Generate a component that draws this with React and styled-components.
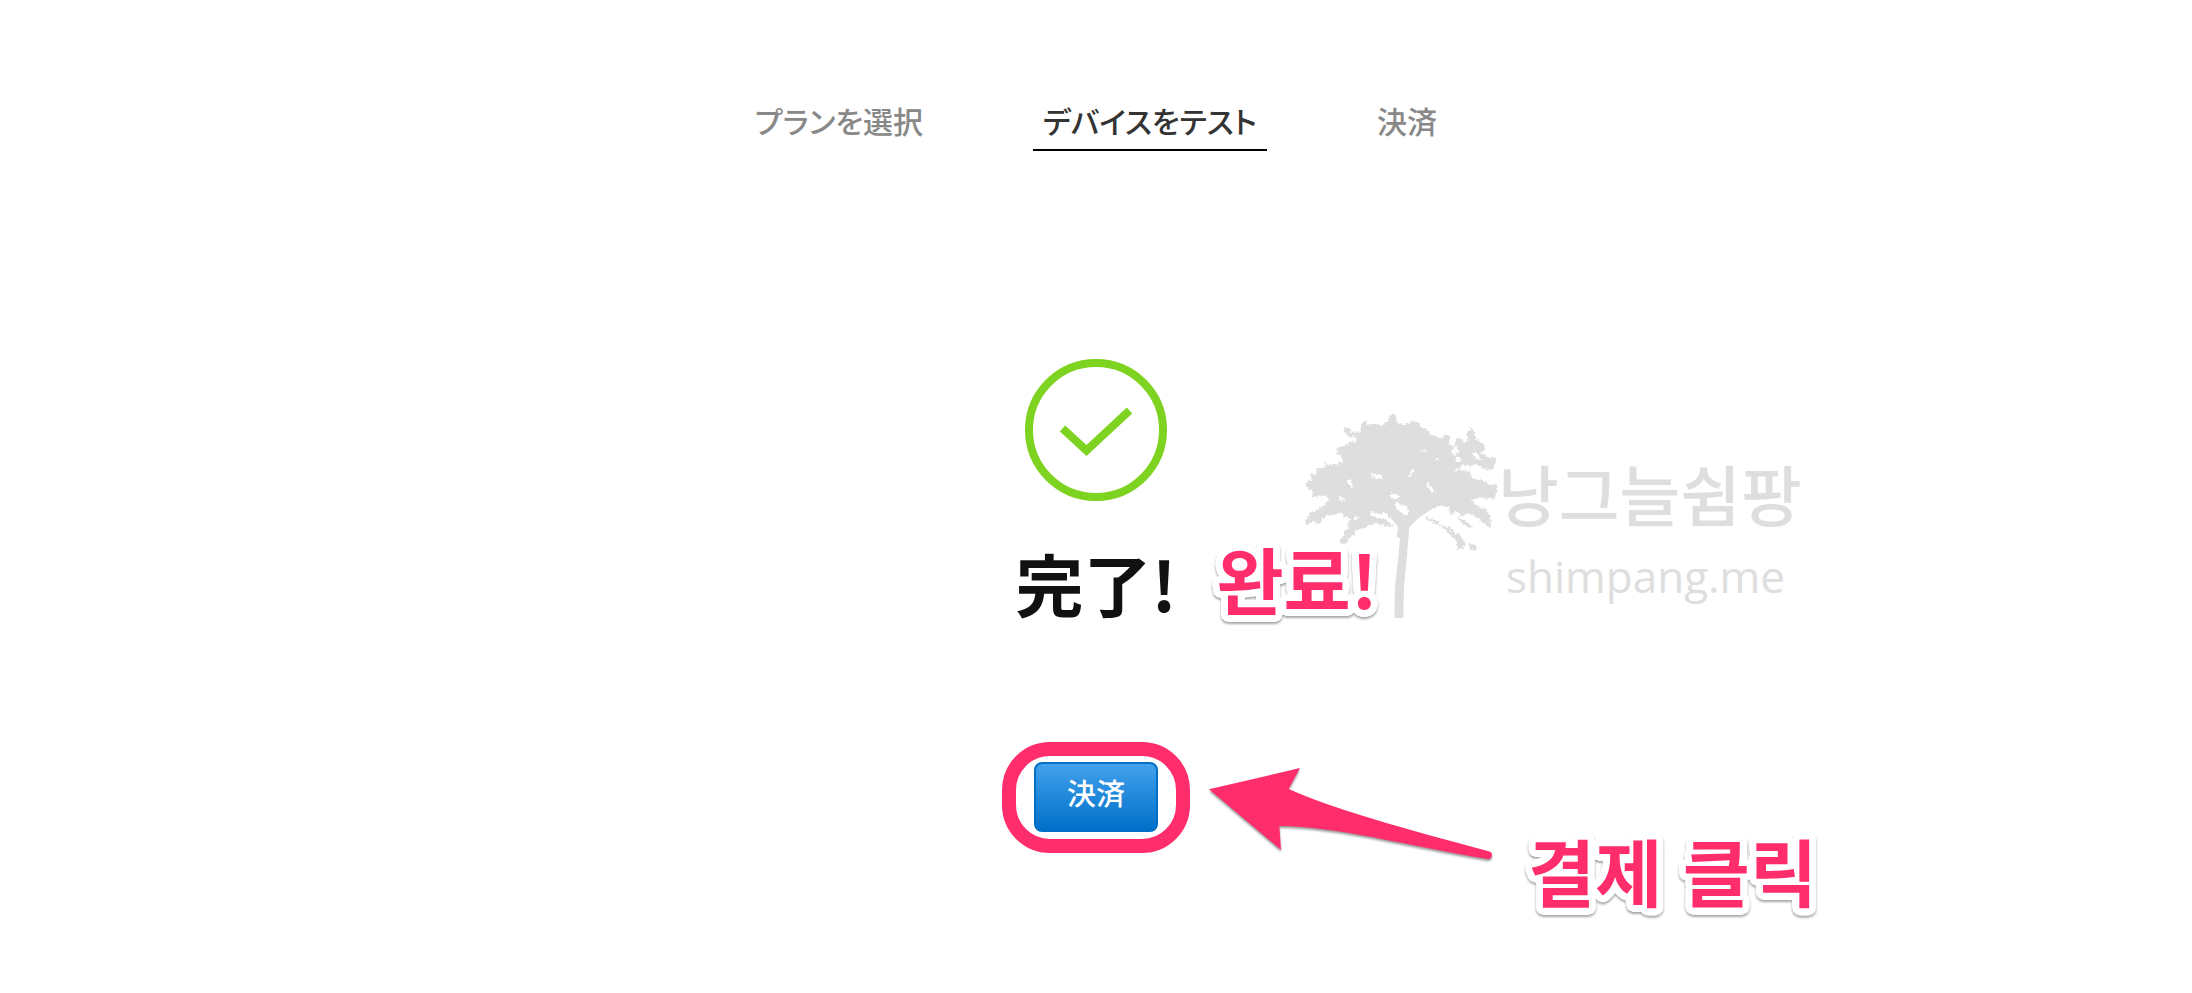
import React from 'react';
import styled, { createGlobalStyle } from 'styled-components';

const COLORS = {
  text: '#111111',
  active: '#333333',
  muted: '#888888',
  success: '#7ed321',
  note: '#ff2d6b',
  watermark: '#dedede',
};

// white ring of shadows, gives the notes a rounded outline
const outline = Array.from({ length: 32 }, (_, i) => {
  const angle = (i * Math.PI) / 16;
  const x = (Math.cos(angle) * 7).toFixed(2);
  const y = (Math.sin(angle) * 7).toFixed(2);
  return `${x}px ${y}px 0 white`;
})
  .concat('3px 0 0 white', '-3px 0 0 white', '0 3px 0 white', '0 -3px 0 white')
  .join(', ');

const GlobalStyle = createGlobalStyle`
  body {
    margin: 0;
    background: white;
    font-family: 'Noto Sans CJK JP', 'Noto Sans', sans-serif;
  }
`;

const SPage = styled.div`
  min-height: 100vh;
  box-sizing: border-box;
  padding: 98px 24px 80px;
  overflow: hidden;
`;
const SSteps = styled.nav`
  display: flex;
  justify-content: center;
  gap: 100px;
`;
const SStep = styled.a`
  padding: 0 10px 6px;
  border-bottom: 2px solid ${({ $active }) => ($active ? 'black' : 'transparent')};
  color: ${({ $active }) => ($active ? COLORS.active : COLORS.muted)};
  font-size: 30px;
  font-weight: 500;
  line-height: 45px;
  font-feature-settings: 'palt';
  text-decoration: none;
`;
const SResult = styled.main`
  position: relative;
  display: flex;
  flex-direction: column;
  align-items: center;
  padding-top: 208px;
`;
const SCheck = styled.svg`
  width: 142px;
  height: 142px;
`;
const STitleRow = styled.div`
  position: relative;
  margin-top: 34px;
`;
const STitle = styled.h1`
  margin: 0;
  color: ${COLORS.text};
  font-size: 68px;
  font-weight: 700;
  line-height: 96px;
  font-feature-settings: 'palt';
`;
const SButtonRow = styled.div`
  position: relative;
  margin-top: 111px;
  padding: 6px 18px 7px;
  border: 14px solid ${COLORS.note};
  border-radius: 48px;
`;
const SButton = styled.button`
  display: block;
  width: 124px;
  height: 70px;
  padding: 0 0 10px;
  border: 2px solid #0070c9;
  border-radius: 8px;
  background: linear-gradient(#42a1ec, #0070c9);
  color: white;
  font-family: inherit;
  font-size: 29px;
  font-weight: 500;
  line-height: 44px;
  cursor: pointer;

  &:hover {
    filter: brightness(95%);
  }
`;
const SNote = styled.span`
  position: absolute;
  left: ${({ $left }) => $left}px;
  top: ${({ $top }) => $top}px;
  color: ${COLORS.note};
  font-family: 'Noto Sans CJK KR', sans-serif;
  font-size: 73px;
  font-weight: 700;
  line-height: 96px;
  white-space: nowrap;
  text-shadow: ${outline};
  filter: drop-shadow(0 2px 1px rgba(0, 0, 0, 0.35));
`;
const SArrow = styled.svg`
  position: absolute;
  left: 174px;
  top: -7px;
  width: 320px;
  height: 130px;
  filter: drop-shadow(0 2px 1px rgba(0, 0, 0, 0.4));
`;
const SWatermark = styled.div`
  position: absolute;
  left: 50%;
  top: 249px;
  display: flex;
  margin-left: 194px;
  color: ${COLORS.watermark};
`;
const STree = styled.svg`
  width: 230px;
  height: 230px;
`;
const SBrand = styled.div`
  display: flex;
  flex-direction: column;
  margin-left: -22px;
  padding-top: 44px;
  white-space: nowrap;
`;
const SBrandName = styled.span`
  font-family: 'Noto Sans CJK KR', sans-serif;
  font-size: 66px;
  font-weight: 500;
  line-height: 96px;
`;
const SBrandSite = styled.span`
  padding: 6px 0 0 8px;
  font-family: 'Open Sans', sans-serif;
  font-size: 44px;
  line-height: 60px;
`;

const Tree = () => (
  <STree viewBox="0 0 690 690" fill="currentColor" aria-hidden="true">
    <filter id="leaves" x="-0.1" y="-0.1" width="1.2" height="1.2" colorInterpolationFilters="sRGB">
      <feTurbulence type="fractalNoise" baseFrequency="0.13" numOctaves="3" seed="4" />
      <feDisplacementMap in="SourceGraphic" scale="15" xChannelSelector="R" yChannelSelector="G" />
    </filter>
    <g filter="url(#leaves)">
      <path
        fillRule="evenodd"
        d="M296 50L308 40L322 50L318 64L340 76L372 64L386 68L390 80L412 90L424 104L450 114L468 104L480 108L476 130L492 140L500 114L514 116L518 130L532 122L530 100L544 82L556 100L558 120L580 130L584 148L570 160L590 172L616 170L618 190L604 212L582 206L560 192L540 200L520 192L508 208L540 216L548 236L580 242L600 256L618 252L622 270L612 298L590 296L570 292L545 300L560 318L590 330L602 344L604 362L598 384L584 372L560 350L534 340L516 350L500 334L480 346L478 322L450 318L420 326L396 340L380 354L360 366L340 376L322 378L304 356L286 338L262 342L246 334L240 350L222 358L196 348L186 362L170 350L160 352L156 340L130 346L108 344L96 362L84 376L74 362L48 374L46 362L62 336L88 326L108 312L118 298L104 284L80 290L66 288L68 274L48 260L48 248L64 238L62 222L78 226L80 206L104 200L106 188L116 196L146 190L160 184L154 170L140 156L142 142L164 140L180 126L196 124L200 110L174 108L162 94L164 82L178 84L182 98L204 94L210 100L214 72L228 64L232 76L250 70L282 78L280 66L298 66ZM306 278L302 292L318 298L332 288ZM318 306L312 314L326 330L346 346L356 340L352 322ZM412 246L408 258L424 276L434 274ZM180 238L170 244L186 266L190 256ZM236 216L250 232L278 238L272 226ZM500 136L482 156L494 168L504 154ZM366 206L354 232L364 228L372 212ZM498 172L496 186L512 186L510 174ZM560 158L548 160L560 178L576 180ZM152 288L146 298L166 304ZM392 150L408 158L408 146ZM440 170L436 180L446 178ZM508 200L490 212L506 212Z"
      />
      <path d="M410 350L440 362L450 376L478 382L494 400L510 404L524 430L522 444L504 448L500 426L486 410L462 386L440 372L412 360ZM536 424L562 444L554 452L538 444ZM500 350L520 358L546 380L540 386L512 366ZM176 362L230 346L290 360L312 378L300 382L262 372L240 374L222 384L200 388L196 404L178 410L170 430L150 432L150 420L164 410L162 396L174 384Z" />
    </g>
    <path d="M290 318L320 358L336 374L350 370L366 342L410 312L464 294L490 300L430 324L388 352L358 382L355 418L350 480L342 560L340 654H313L315 560L325 470L330 415L320 410L324 380L296 344Z" />
  </STree>
);

const steps = [
  { name: 'プランを選択' },
  { name: 'デバイスをテスト', active: true },
  { name: '決済' },
];

const App = () => (
  <SPage>
    <GlobalStyle />
    <SSteps>
      {steps.map(({ name, active }) => (
        <SStep
          key={name}
          href="#"
          $active={active}
          aria-current={active ? 'step' : undefined}
        >
          {name}
        </SStep>
      ))}
    </SSteps>
    <SResult>
      <SWatermark>
        <Tree />
        <SBrand>
          <SBrandName lang="ko">낭그늘쉼팡</SBrandName>
          <SBrandSite>shimpang.me</SBrandSite>
        </SBrand>
      </SWatermark>
      <SCheck viewBox="0 0 142 142" fill="none" stroke={COLORS.success} aria-hidden="true">
        <circle cx="71" cy="71" r="67" strokeWidth="8" />
        <path d="M37.500 69.500L61.500 91.500L104.500 51.500" strokeWidth="8" />
      </SCheck>
      <STitleRow>
        <STitle lang="ja">完了!</STitle>
        <SNote lang="ko" $left={201} $top={-6}>
          완료!
        </SNote>
      </STitleRow>
      <SButtonRow>
        <SButton type="button">決済</SButton>
        <SArrow viewBox="0 0 960 390" fill={COLORS.note} aria-hidden="true">
          <path d="M57 121L330 57L296 120C430 180 640 238 896 307A11 11 0 0 1 892 330C650 290 440 232 268 231L273 303Z" />
        </SArrow>
        <SNote lang="ko" $left={512} $top={65}>
          결제 클릭
        </SNote>
      </SButtonRow>
    </SResult>
  </SPage>
);

export default App;
